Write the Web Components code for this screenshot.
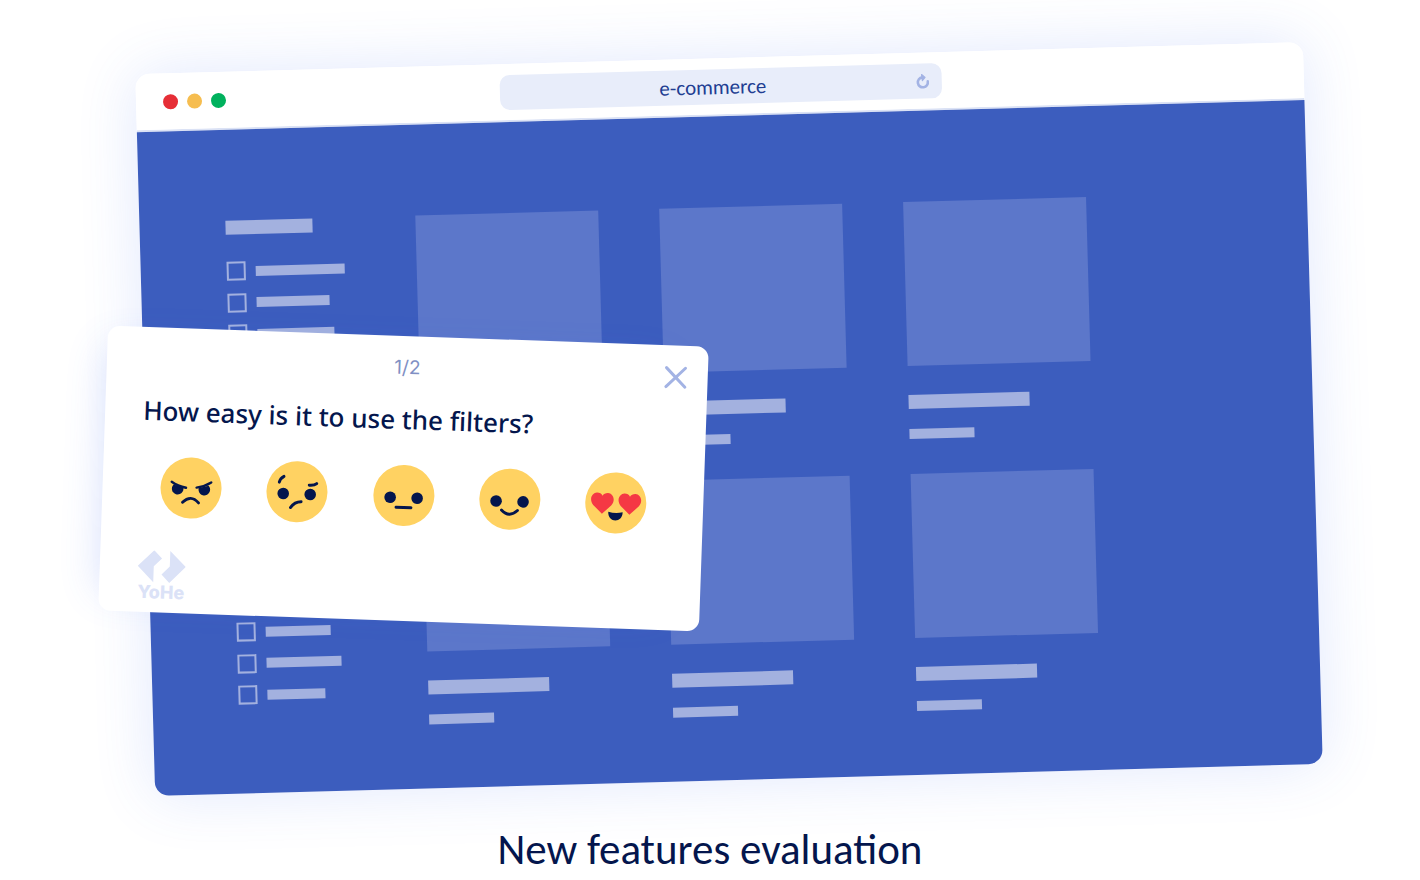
<!DOCTYPE html>
<html lang="en">
<head>
<meta charset="utf-8">
<meta name="viewport" content="width=device-width, initial-scale=1">
<title>New features evaluation</title>
<style>
  body { margin: 0; background: #fff; overflow-x: hidden; }
</style>
</head>
<body>
<feature-showcase>
  <browser-window slot="stage" address="e-commerce">
    <filter-group slot="filters" bars="89,73,77"></filter-group>
    <filter-group slot="filters" bars="65,75,58"></filter-group>
    <product-card></product-card>
    <product-card></product-card>
    <product-card></product-card>
    <product-card></product-card>
    <product-card></product-card>
    <product-card></product-card>
  </browser-window>
  <survey-popup slot="overlay" step="1/2">
    <span slot="question">How easy is it to use the filters?</span>
    <face-button mood="angry"></face-button>
    <face-button mood="doubtful"></face-button>
    <face-button mood="neutral"></face-button>
    <face-button mood="happy"></face-button>
    <face-button mood="love"></face-button>
    <yohe-logo slot="brand"></yohe-logo>
  </survey-popup>
  <span slot="caption">New features evaluation</span>
</feature-showcase>

<script>
const define = (name, render) => customElements.define(name, class extends HTMLElement {
  connectedCallback() {
    if (this.shadowRoot) return;
    const template = document.createElement('template');
    template.innerHTML = render(this);
    this.attachShadow({ mode: 'open' }).append(template.content.cloneNode(true));
  }
});

define('feature-showcase', () => `
  <style>
    :host { display: block; color: #04164d; }
    .stage { position: relative; padding: 58px 107px 0 145px; }
    .overlay { position: absolute; left: 103px; top: 336px; }
    h1 { margin: 46px 0 0; font: 400 43px/48px Carlito, Lato, sans-serif; text-align: center; }
  </style>
  <main>
    <div class="stage">
      <slot name="stage"></slot>
      <div class="overlay"><slot name="overlay"></slot></div>
    </div>
    <h1><slot name="caption"></slot></h1>
  </main>`);

define('browser-window', el => `
  <style>
    :host {
      display: block; border-radius: 14px;
      box-shadow: 0 0 60px rgba(70, 110, 240, .16); transform: rotate(-1.58deg);
    }
    header {
      display: grid; grid-template-columns: 1fr 442px 1fr; align-items: center;
      height: 56px; padding-left: 2px; border-bottom: 2px solid #dbe2f5;
      border-radius: 14px 14px 0 0; background: #fff;
    }
    .lights { display: flex; gap: 9px; padding-left: 25px; }
    .lights i { width: 15px; height: 15px; border-radius: 50%; background: #e62e36; }
    .lights i:nth-child(2) { background: #f6bd4f; }
    .lights i:nth-child(3) { background: #00b15d; }
    .address {
      display: flex; align-items: center; height: 35px; padding: 2px 10px 0 0;
      box-sizing: border-box; border-radius: 10px; background: #e8edfa;
    }
    input {
      flex: 1; min-width: 0; border: 0; padding: 0 0 0 12px; background: none; outline: 0;
      color: #213d92; text-align: center; font: 400 21px/28px Carlito, Lato, sans-serif;
    }
    button { border: 0; padding: 0; background: none; width: 18px; height: 18px; }
    svg { display: block; }
    .page { display: flex; padding: 91px 86px 64px; border-radius: 0 0 14px 14px; background: #3c5dbe; }
    aside { flex: 0 0 190px; display: flex; flex-direction: column; gap: 238px; }
    .products { display: grid; grid-template-columns: repeat(3, 183px); gap: 35px 61px; align-content: start; }
  </style>
  <header>
    <div class="lights"><i></i><i></i><i></i></div>
    <div class="address">
      <input type="text" aria-label="Address" value="${el.getAttribute('address')}">
      <button type="button" aria-label="Reload">
        <svg width="18" height="18" viewBox="0 0 18 18" fill="none" stroke="#a3b3e4" stroke-width="2.6" stroke-linecap="round">
          <path d="M14 9A5 5 0 1 1 8.600 4.800"/><path d="M8 2l3.400 3L8.600 8z" fill="#a3b3e4" stroke-width="1.200" stroke-linejoin="round"/>
        </svg>
      </button>
    </div>
  </header>
  <div class="page">
    <aside><slot name="filters"></slot></aside>
    <div class="products"><slot></slot></div>
  </div>`);

define('filter-group', el => `
  <style>
    :host { display: block; }
    .title { width: 87px; height: 14px; margin-bottom: 27px; background: #a3b1df; }
    .rows { display: flex; flex-direction: column; justify-content: space-between; height: 82px; }
    label { display: flex; align-items: center; gap: 10px; }
    input {
      appearance: none; width: 19px; height: 19px; margin: 0;
      border: 2px solid #a3b1df; box-sizing: border-box;
    }
    label i { height: 10px; background: #a3b1df; }
  </style>
  <div class="title"></div>
  <div class="rows">
    ${el.getAttribute('bars').split(',').map((w, n) =>
      `<label><input type="checkbox" aria-label="Filter ${n + 1}"><i style="width:${w}px"></i></label>`).join('')}
  </div>`);

define('product-card', () => `
  <style>
    :host { display: block; }
    .photo { height: 164px; background: #5c77ca; }
    .name { width: 121px; height: 14px; margin-top: 29px; background: #a3b1df; }
    .price { width: 65px; height: 10px; margin-top: 20px; background: #a3b1df; }
  </style>
  <div class="photo"></div><div class="name"></div><div class="price"></div>`);

define('survey-popup', el => `
  <style>
    :host {
      display: flex; flex-direction: column; box-sizing: border-box; width: 601px; min-height: 285px;
      border-radius: 12px; background: #fff; transform: rotate(2deg);
      box-shadow: -20px 0 40px -20px rgba(70, 110, 240, .2);
    }
    .top { display: grid; grid-template-columns: 1fr auto 1fr; align-items: center; padding: 20px 20px 0; }
    .step { grid-column: 2; font: 400 19px/24px Inter, sans-serif; color: #8190c4; }
    .close { justify-self: end; border: 0; padding: 0; background: none; width: 24px; height: 24px; }
    svg { display: block; }
    h2 { margin: 21px 38px 0; font: 500 26px/36px "Noto Sans", sans-serif; white-space: nowrap; }
    .faces { display: flex; justify-content: space-between; padding: 28px 57px 0 58px; }
    .brand { margin: 33px 0 0 37px; }
  </style>
  <div class="top">
    <span class="step">${el.getAttribute('step')}</span>
    <button class="close" type="button" aria-label="Close">
      <svg width="24" height="24" viewBox="0 0 24 24" stroke="#a3b3e4" stroke-width="3" stroke-linecap="round"><path d="M2.500 2.500l19 19M21.500 2.500l-19 19"/></svg>
    </button>
  </div>
  <h2><slot name="question"></slot></h2>
  <div class="faces"><slot></slot></div>
  <div class="brand"><slot name="brand"></slot></div>`);

const eyes = '<g fill="#04164d"><circle cx="16.800" cy="32.700" r="5.800"/><circle cx="43.800" cy="32.700" r="5.800"/></g>';
const line = 'fill="none" stroke="#04164d" stroke-width="2.900" stroke-linecap="round"';
const heart = 'M0 10.500L-9 2C-14-4-10-10.500-5.500-10.500C-3-10.500-1-9.500 0-7.500C1-9.500 3-10.500 5.500-10.500C10-10.500 14-4 9 2Z';
const moods = {
  angry: `<g fill="#04164d"><path d="M13 27.500L22.800 30.200A5.800 5.800 0 1 1 13 27.500Z"/><path d="M48 27.500L38.200 30.200A5.800 5.800 0 1 0 48 27.500Z"/></g>
    <path d="M11 24.800Q17 29 25.500 30.300M50.500 24.200Q44 28.500 36 29.800" ${line} style="stroke-width:2.400"/>
    <path d="M22.500 45Q30.500 36.500 38.500 45" ${line}/>`,
  doubtful: `${eyes}<path d="M12.500 21.500Q13.300 17.500 17 15.500" ${line}/><path d="M42.500 23.500Q47.500 23.800 50 21.600" ${line}/><path d="M24.500 46.500Q28.500 40.500 35 40.300" ${line}/>`,
  neutral: `${eyes}<path d="M23 42.500H38" ${line}/>`,
  happy: `${eyes}<path d="M22.500 41.500Q30.500 49.500 38.500 41.500" ${line}/>`,
  love: `<g fill="#f53844"><path transform="translate(17 31.300)" d="${heart}"/><path transform="translate(44.500 31.300)" d="${heart}"/></g>
    <path fill="#04164d" d="M23.300 39.700Q30.500 41.500 37.700 39.700C38 51 23 51 23.300 39.700Z"/>`
};

define('face-button', el => `
  <style>
    :host { display: block; }
    button { display: block; border: 0; padding: 0; border-radius: 50%; background: #ffd262; width: 61px; height: 61px; }
    svg { display: block; }
  </style>
  <button type="button" aria-label="${el.getAttribute('mood')}">
    <svg width="61" height="61" viewBox="0 0 61 61">${moods[el.getAttribute('mood')]}</svg>
  </button>`);

define('yohe-logo', () => `
  <style>
    :host { display: flex; flex-direction: column; align-items: center; width: 50px; color: #dbe2f7; }
    svg { display: block; }
    b { font: 800 18px/18px Inter, sans-serif; }
  </style>
  <svg width="48" height="33" viewBox="0 0 48 33" fill="currentColor">
    <path d="M16 0L24 8L16 16V32L0 16Z"/><path d="M32 0L48 15.500L32 32L24 24L32 15.500Z"/>
  </svg>
  <b>YoHe</b>`);
</script>
</body>
</html>
